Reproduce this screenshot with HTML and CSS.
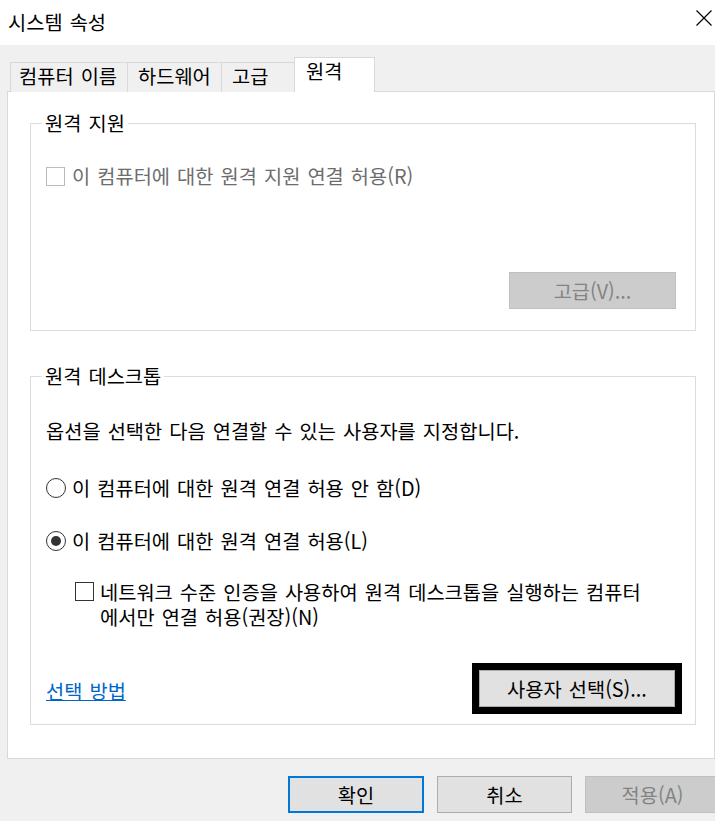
FILE: index.html
```html
<!DOCTYPE html>
<html lang="ko">
<head>
    <meta charset="UTF-8">
    <meta name="viewport" content="width=device-width, initial-scale=1.0">
    <title>시스템 속성</title>
    <link rel="stylesheet" href="styles.css">
</head>
<body>

    <!-- Title Bar -->
    <div class="titlebar">
        <span class="title">시스템 속성</span>
        <svg class="close" width="16" height="16" viewBox="0 0 16 16">
            <path d="M0.5 0.5 L15.5 15.5 M15.5 0.5 L0.5 15.5" stroke="#000" stroke-width="1.2" fill="none"/>
        </svg>
    </div>

    <!-- Tabs -->
    <div class="tabs">
        <div class="tab tab-name">컴퓨터 이름</div>
        <div class="tab tab-hw">하드웨어</div>
        <div class="tab tab-adv">고급</div>
        <div class="tab tab-remote active">원격</div>
    </div>

    <!-- Tab Panel -->
    <div class="panel">

        <div class="group group-assist">
            <span class="group-title">원격 지원</span>
            <div class="option disabled">
                <span class="check"></span>
                <span>이 컴퓨터에 대한 원격 지원 연결 허용(R)</span>
            </div>
            <div class="group-actions">
                <div class="btn btn-disabled btn-advanced">고급(V)...</div>
            </div>
        </div>

        <div class="group group-desktop">
            <span class="group-title">원격 데스크톱</span>
            <p class="hint">옵션을 선택한 다음 연결할 수 있는 사용자를 지정합니다.</p>
            <div class="option radio-none">
                <span class="radio"></span>
                <span>이 컴퓨터에 대한 원격 연결 허용 안 함(D)</span>
            </div>
            <div class="option radio-allow">
                <span class="radio on"></span>
                <span>이 컴퓨터에 대한 원격 연결 허용(L)</span>
            </div>
            <div class="option nla">
                <span class="check"></span>
                <span>네트워크 수준 인증을 사용하여 원격 데스크톱을 실행하는 컴퓨터<br>에서만 연결 허용(권장)(N)</span>
            </div>
            <div class="desktop-actions">
                <a class="link" href="#">선택 방법</a>
                <div class="frame">
                    <div class="btn btn-users">사용자 선택(S)...</div>
                </div>
            </div>
        </div>

    </div>

    <!-- Dialog Buttons -->
    <div class="dialog-buttons">
        <div class="btn btn-default">확인</div>
        <div class="btn">취소</div>
        <div class="btn btn-disabled">적용(A)</div>
    </div>

</body>
</html>
```

FILE: styles.css
```css
html, body {
    margin: 0;
    height: 821px;
    overflow: hidden;
}

body {
    background-color: #f0f0f0;
    color: #000;
    font-family: "Noto Sans CJK KR", "Noto Sans", sans-serif;
    font-size: 19.8px;
    word-spacing: 1.5px;
}

/* Title Bar */
.titlebar {
    height: 45px;
    background-color: #fff;
    display: flex;
    align-items: center;
    justify-content: space-between;
    padding: 0 3px 3px 8px;
    box-sizing: border-box;
}

.close {
    display: block;
    margin-top: -6px;
}

/* Tabs */
.tabs {
    display: flex;
    align-items: flex-end;
    height: 34px;
    margin-top: 13px;
    margin-bottom: -1px;
    padding-left: 10px;
    position: relative;
}

.tab {
    height: 30px;
    line-height: 25px;
    box-sizing: border-box;
    border-top: 1px solid #d9d9d9;
    border-left: 1px solid #d9d9d9;
    background-color: #f0f0f0;
    padding-left: 8px;
    white-space: nowrap;
}

.tab-name { width: 117px; }
.tab-hw { width: 94px; padding-left: 10px; }
.tab-adv { width: 73px; padding-left: 10px; }

.tab.active {
    width: 81px;
    height: 35px;
    line-height: 25px;
    padding-left: 11px;
    border-right: 1px solid #d9d9d9;
    background-color: #fff;
    position: relative;
    z-index: 1;
}

/* Panel */
.panel {
    margin-left: 7px;
    width: 708px;
    box-sizing: border-box;
    background-color: #fff;
    border: 1px solid #d9d9d9;
    padding-top: 31px;
    padding-bottom: 33px;
}

/* Group Boxes */
.group {
    margin-left: 22px;
    width: 666px;
    box-sizing: border-box;
    border: 1px solid #dcdcdc;
    padding: 0 19px 0 15px;
    display: flex;
    flex-direction: column;
    align-items: flex-start;
}

.group-desktop {
    margin-top: 45px;
    padding-bottom: 10px;
}

.group-assist {
    padding-bottom: 21px;
}

.group-title {
    margin-top: -14px;
    margin-left: -4px;
    padding: 0 3px;
    line-height: 26px;
    background-color: #fff;
}

.option {
    display: flex;
    align-items: center;
    line-height: 26px;
}

.option.disabled {
    color: #6d6d6d;
    margin-top: 27px;
}

.hint {
    margin: 29px 0 0;
    line-height: 26px;
}

.radio-none { margin-top: 31px; }
.radio-allow { margin-top: 27px; }

.nla {
    margin-top: 25px;
    margin-left: 29px;
    align-items: flex-start;
    line-height: 25px;
}

/* Checkbox & Radio */
.check {
    width: 19px;
    height: 19px;
    box-sizing: border-box;
    border: 1px solid #333;
    background-color: #fff;
    margin-right: 7px;
    flex: none;
}

.disabled .check {
    border-color: #bcbcbc;
}

.nla .check {
    margin-top: 3px;
    margin-right: 6px;
}

.radio {
    width: 20px;
    height: 20px;
    box-sizing: border-box;
    border: 1px solid #333;
    border-radius: 50%;
    margin-right: 6px;
    display: flex;
    align-items: center;
    justify-content: center;
    flex: none;
}

.radio.on::after {
    content: "";
    width: 10px;
    height: 10px;
    border-radius: 50%;
    background-color: #333;
}

/* Buttons */
.btn {
    height: 37px;
    box-sizing: border-box;
    border: 1px solid #adadad;
    background-color: #e1e1e1;
    display: flex;
    align-items: center;
    justify-content: center;
    white-space: nowrap;
}

.btn-disabled {
    background-color: #cccccc;
    border-color: #bfbfbf;
    color: #838383;
}

.group-actions {
    align-self: stretch;
    display: flex;
    justify-content: flex-end;
    margin-top: 83px;
}

.btn-advanced {
    width: 167px;
}

.desktop-actions {
    align-self: stretch;
    display: flex;
    align-items: center;
    justify-content: space-between;
    margin-top: 34px;
}

.link {
    color: #0066cc;
    text-decoration: underline;
    margin-top: 3px;
}

.frame {
    border: 7px solid #000;
    margin-right: -6px;
}

.btn-users {
    width: 196px;
}

/* Dialog Buttons */
.dialog-buttons {
    display: flex;
    gap: 13px;
    margin-top: 17px;
    padding-left: 288px;
}

.dialog-buttons .btn {
    width: 135px;
    flex: none;
}

.dialog-buttons .btn-default {
    width: 136px;
    border: 2px solid #0078d7;
}
```
